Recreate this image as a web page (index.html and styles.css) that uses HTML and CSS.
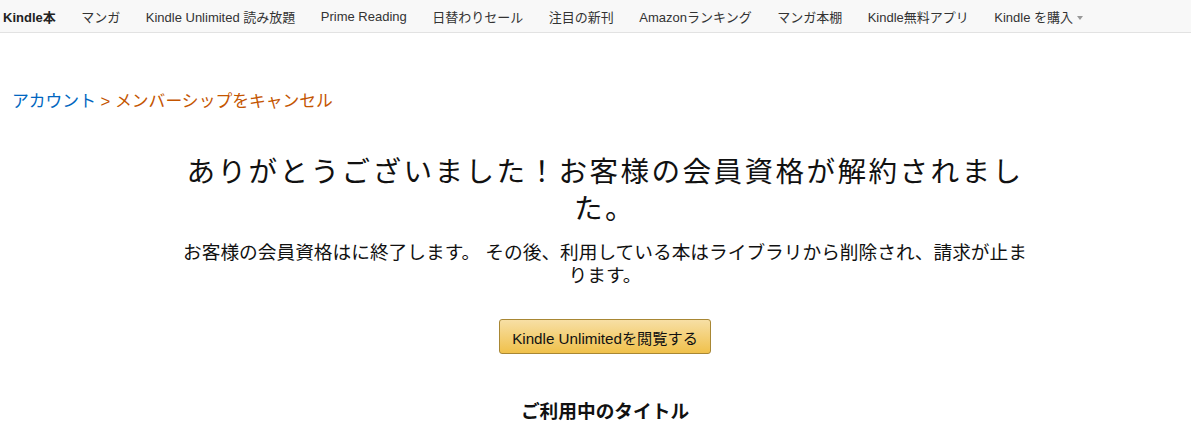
FILE: index.html
```html
<!DOCTYPE html>
<html lang="ja">
<head>
    <meta charset="UTF-8">
    <meta name="viewport" content="width=device-width, initial-scale=1.0">
    <title>メンバーシップをキャンセル</title>
    <link rel="stylesheet" href="styles.css">
</head>
<body>
    <nav class="top-nav">
        <a class="nav-item nav-home" href="#">Kindle本</a>
        <a class="nav-item" href="#">マンガ</a>
        <a class="nav-item" href="#">Kindle Unlimited 読み放題</a>
        <a class="nav-item" href="#">Prime Reading</a>
        <a class="nav-item" href="#">日替わりセール</a>
        <a class="nav-item" href="#">注目の新刊</a>
        <a class="nav-item" href="#">Amazonランキング</a>
        <a class="nav-item" href="#">マンガ本棚</a>
        <a class="nav-item" href="#">Kindle無料アプリ</a>
        <a class="nav-item" href="#">Kindle を購入<span class="caret"></span></a>
    </nav>

    <div class="breadcrumb">
        <a href="#" class="crumb-link">アカウント</a>
        <span class="crumb-current">&gt; メンバーシップをキャンセル</span>
    </div>

    <main class="content">
        <h1>ありがとうございました！お客様の会員資格が解約されました。</h1>
        <p class="notice">お客様の会員資格はに終了します。 その後、利用している本はライブラリから削除され、請求が止まります。</p>
        <div class="actions">
            <button class="browse-btn">Kindle Unlimitedを閲覧する</button>
        </div>
        <h2>ご利用中のタイトル</h2>
    </main>
</body>
</html>
```

FILE: styles.css
```css
body {
    margin: 0;
    font-family: 'Liberation Sans', Arial, 'Noto Sans CJK JP', sans-serif;
    color: #111;
    background: #fff;
}

.top-nav {
    display: flex;
    align-items: center;
    height: 32px;
    background: #f8f8f8;
    border-bottom: 1px solid #e2e2e2;
    padding-left: 3px;
}

.nav-item {
    font-size: 13px;
    color: #333;
    text-decoration: none;
    margin-right: 25.5px;
    white-space: nowrap;
}

.nav-home {
    font-weight: bold;
    color: #222;
}

.caret {
    display: inline-block;
    width: 0;
    height: 0;
    margin-left: 4px;
    vertical-align: middle;
    border-left: 3.5px solid transparent;
    border-right: 3.5px solid transparent;
    border-top: 4px solid #999;
}

.breadcrumb {
    margin: 58px 0 0 12px;
    font-size: 16.8px;
    line-height: 22px;
}

.crumb-link {
    color: #0066c0;
    text-decoration: none;
}

.crumb-current {
    color: #c45500;
}

.content {
    width: 850px;
    margin: 0 0 0 180px;
    text-align: center;
}

h1 {
    font-size: 28.6px;
    letter-spacing: 2.4px;
    font-weight: normal;
    line-height: 37px;
    margin: 41px 0 0;
    color: #111;
}

.notice {
    font-size: 18.7px;
    line-height: 23px;
    margin: 13px 0 0;
}

.actions {
    margin-top: 32px;
}

.browse-btn {
    width: 212px;
    height: 35px;
    font-family: inherit;
    font-size: 15.2px;
    color: #111;
    background: linear-gradient(to bottom, #f7dfa5, #f0c14b);
    border: 1px solid #a88734;
    border-radius: 3px;
    cursor: pointer;
}

h2 {
    font-size: 18.7px;
    font-weight: bold;
    margin: 42px 0 0;
    color: #111;
}
```
